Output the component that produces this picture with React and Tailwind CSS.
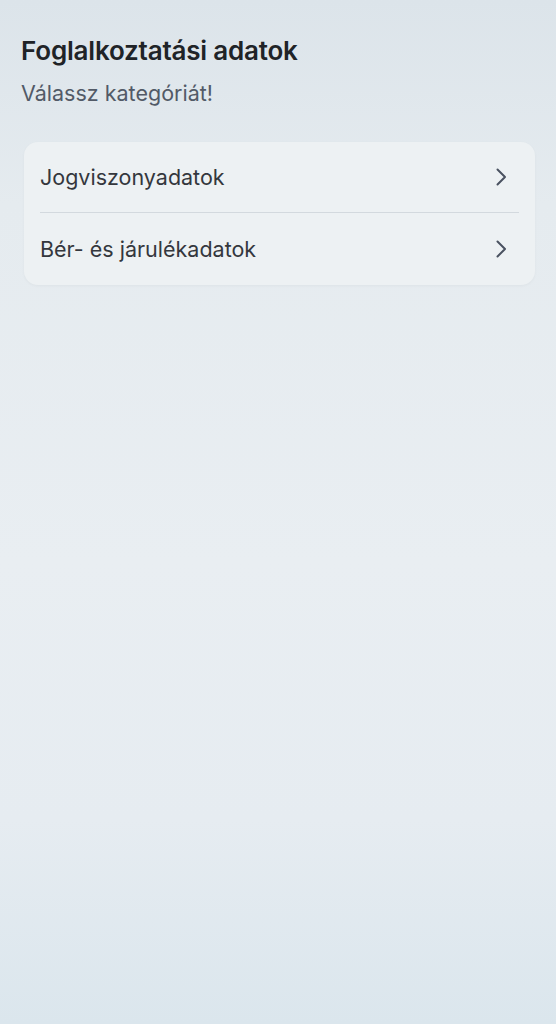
import React from "react";

function Chevron() {
  return (
    <svg width="14" height="20" viewBox="0 0 14 20" fill="none" className="shrink-0">
      <path d="M3.5 2.5 L11 10 L3.5 17.5" stroke="#4a5260" strokeWidth="2" strokeLinecap="round" strokeLinejoin="round" />
    </svg>
  );
}

export default function App() {
  return (
    <div
      className="min-h-[1024px] w-full bg-[linear-gradient(180deg,#dce4ea_0%,#e5ebef_20%,#e9eef2_55%,#e6ecf1_80%,#dbe6ed_100%)] text-[#2a2d33]"
      style={{ fontFamily: "Inter, 'Noto Sans', sans-serif" }}
    >
      <div className="pt-[35px] pl-[21px] pr-[20px]">
        <h1 className="text-[26px] font-semibold leading-[32px] text-[#202327] tracking-[-0.2px]">
          Foglalkoztatási adatok
        </h1>
        <p className="mt-[12px] text-[21.5px] leading-[28px] text-[#525a67]">Válassz kategóriát!</p>
      </div>
      <div className="mx-[24px] mt-[35px] w-[511px] rounded-[14px] bg-[#edf1f3] shadow-[0_1px_3px_rgba(0,0,0,0.04)]">
        <div className="flex h-[70px] items-center justify-between pl-[16px] pr-[27px]">
          <span className="text-[21.5px] text-[#34373d]">Jogviszonyadatok</span>
          <Chevron />
        </div>
        <div className="mx-[16px] h-px bg-[#d3d9de]" />
        <div className="flex h-[72px] items-center justify-between pl-[16px] pr-[27px]">
          <span className="text-[21.5px] text-[#34373d]">Bér- és járulékadatok</span>
          <Chevron />
        </div>
      </div>
    </div>
  );
}
